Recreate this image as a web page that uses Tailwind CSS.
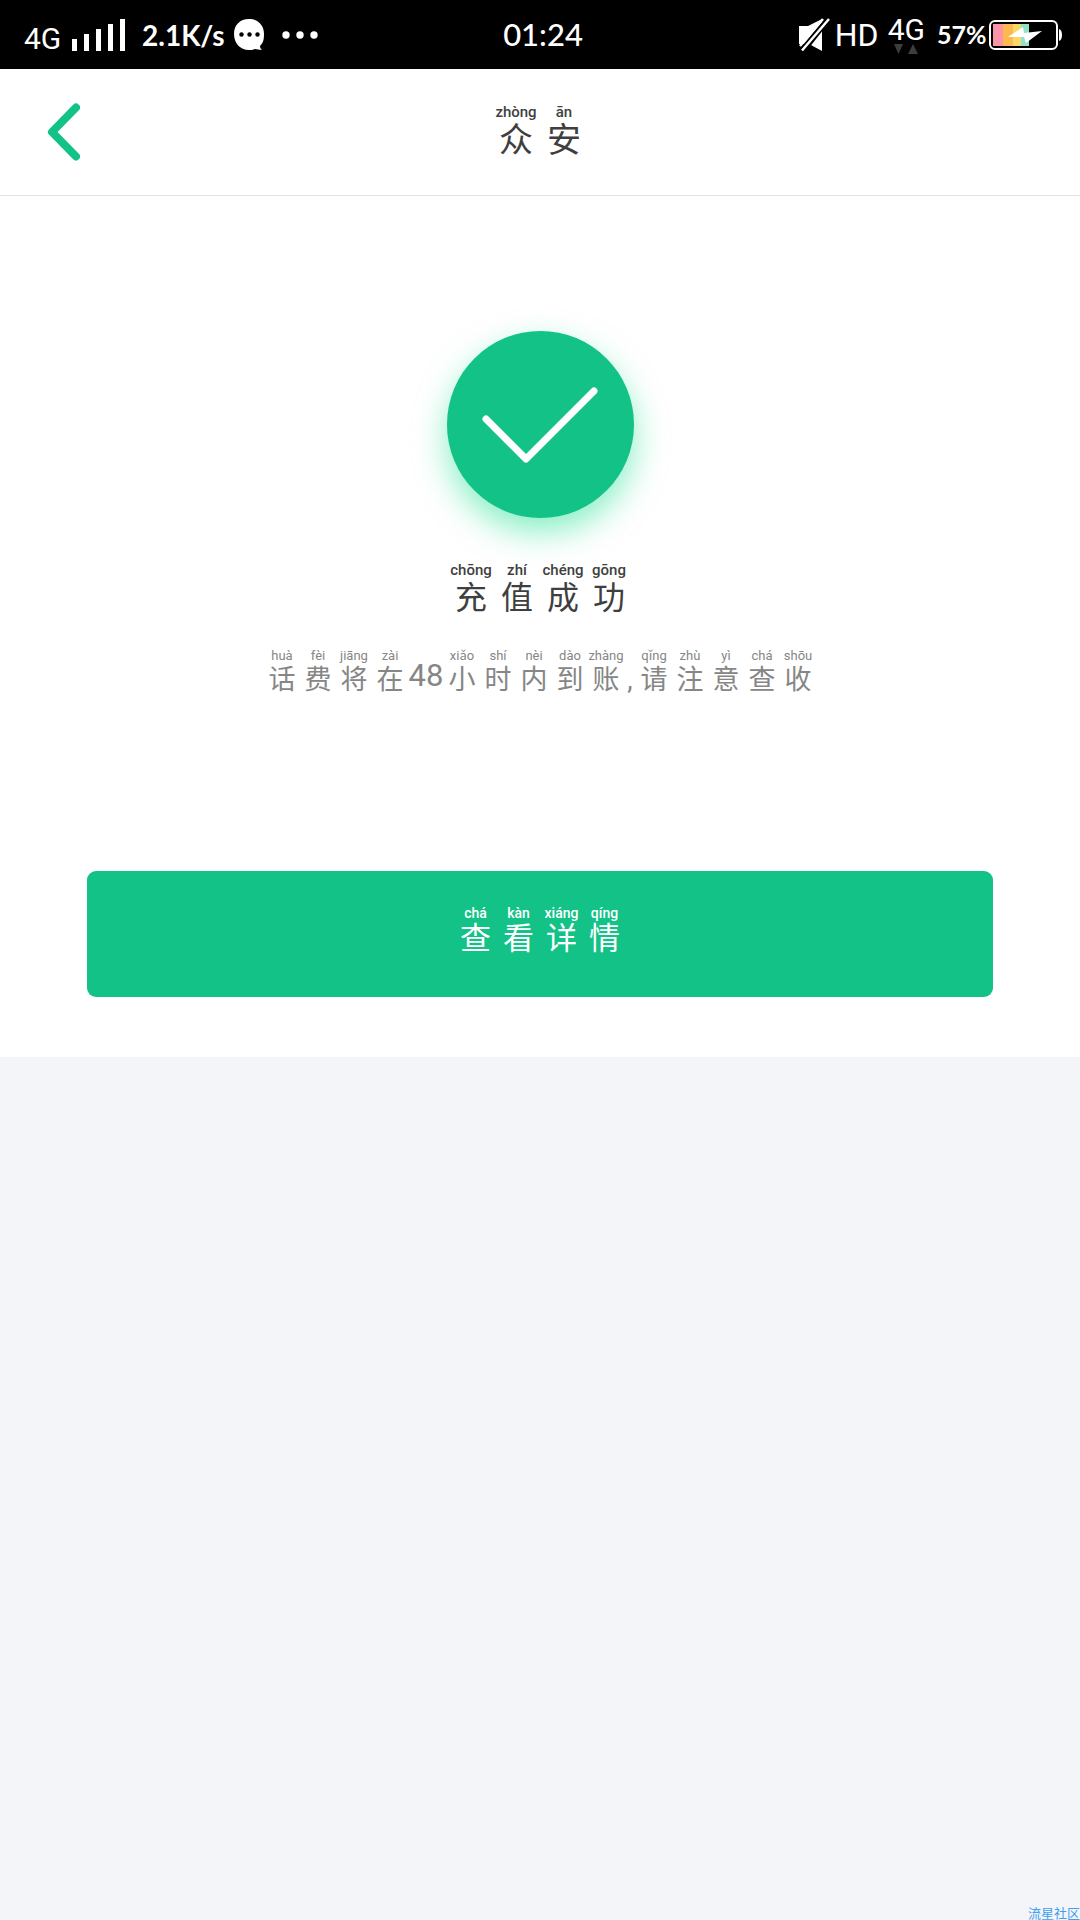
<!DOCTYPE html>
<html lang="zh-CN">
  <head>
    <meta charset="UTF-8" />
    <meta name="viewport" content="width=device-width, initial-scale=1.0" />
    <title>众安</title>
    <script src="https://cdn.jsdelivr.net/npm/@tailwindcss/browser@4"></script>
  </head>
  <body
    class="bg-[#f3f5f9] text-[#3f3f3f] font-[Roboto,'Noto_Sans_CJK_SC',sans-serif] flex flex-col min-h-screen"
  >
    <!-- Status bar -->
    <div
      class="bg-black text-white h-[69px] pl-6 pr-[18px] grid grid-cols-[1fr_auto_1fr] items-center leading-none whitespace-nowrap"
    >
      <div class="flex items-center">
        <span class="text-[30px] w-9 mt-2">4G</span>
        <svg class="ml-3 w-[54px] h-8" viewBox="0 0 54 32" fill="currentColor">
          <path d="M0 20h5v12H0zM12 15h5v17h-5zM24 10h5v22h-5zM36 5h5v27h-5zM48 0h5v32h-5z" />
        </svg>
        <span class="ml-4 w-[88px] text-[28px] font-bold font-[Lato,sans-serif]">2.1K/s</span>
        <svg class="ml-1 w-8 h-8" viewBox="0 0 32 32">
          <path d="M15 0c9 0 15 6 15 15 0 6-1 9-4 12 0 2 1 3 2 4-3 0-5-1-7-1-2 1-4 1-6 1C6 31 0 24 0 15 0 6 6 0 15 0z" fill="#fff" />
          <circle cx="7.500" cy="15.500" r="2.200" />
          <circle cx="15.500" cy="15.500" r="2.200" />
          <circle cx="23.500" cy="15.500" r="2.200" />
        </svg>
        <svg class="ml-4 w-9 h-2" viewBox="0 0 36 8" fill="currentColor">
          <circle cx="4" cy="4" r="3.700" />
          <circle cx="18" cy="4" r="3.700" />
          <circle cx="32" cy="4" r="3.700" />
        </svg>
      </div>

      <span class="text-[31px] font-medium font-[Lato,sans-serif]">01:24</span>

      <div class="flex items-center justify-end">
        <svg class="w-8 h-9" viewBox="0 0 32 36">
          <path d="M0 9h9L23 2v32L10 27H0z" fill="#fff" />
          <path d="M-1 34L27 0l5 3L6 36z" fill="#000" />
          <path d="M1 29L24 2M3 33.500L30 2" stroke="#fff" stroke-width="2.500" />
        </svg>
        <span class="ml-1 w-[45px] text-[32px]">HD</span>
        <div class="ml-2 flex flex-col items-center">
          <span class="text-[30px] leading-7 h-7">4G</span>
          <svg class="w-6 h-[10px]" viewBox="0 0 24 10" fill="#3d3d3d">
            <path d="M0 0h9l-4.500 10zM14 10h10L19 0z" />
          </svg>
        </div>
        <span class="ml-3 w-12 text-[25px] font-bold font-[Lato,sans-serif]">57%</span>
        <svg class="ml-1 w-[73px] h-[30px]" viewBox="0 0 73 30">
          <path d="M4 4h10v22H4z" fill="#fb94a6" />
          <path d="M14 4h10v22H14z" fill="#fdb84f" />
          <path d="M24 4h8v22h-8z" fill="#fbd768" />
          <path d="M32 4h8v22h-8z" fill="#8fe3c8" />
          <rect x="1" y="1" width="67" height="28" rx="5" fill="none" stroke="#fff" stroke-width="2" />
          <path d="M70 9q3 1 3 6t-3 6z" fill="#fff" />
          <path d="M19 17L34 7l1 6 18-2-16 12-2-6z" fill="#fff" />
        </svg>
      </div>
    </div>

    <!-- Header -->
    <header
      class="bg-white h-[127px] border-b border-[#e3e3e3] px-[47px] pb-1 grid grid-cols-[1fr_auto_1fr] items-center"
    >
      <button type="button" aria-label="返回" class="mt-1 justify-self-start text-[#12c286]">
        <svg class="w-[33px] h-[58px]" viewBox="0 0 33 58" fill="none" stroke="currentColor" stroke-width="8" stroke-linecap="round" stroke-linejoin="round">
          <path d="M29 4.500L5 29l24 24.500" />
        </svg>
      </button>
      <h1 class="flex text-[34px] leading-9">
        <ruby class="w-12 flex flex-col-reverse items-center">众<rt class="text-[15px] leading-5 font-medium">zhòng</rt></ruby>
        <ruby class="w-12 flex flex-col-reverse items-center">安<rt class="text-[15px] leading-5 font-medium">ān</rt></ruby>
      </h1>
    </header>

    <!-- Result -->
    <main class="bg-white h-[861px] px-[87px] pt-[135px] flex flex-col items-center">
      <div
        class="size-[187px] shrink-0 rounded-full bg-[#12c286] shadow-[0_14px_32px_#12e28c80] flex items-center justify-center"
      >
        <svg class="w-[116px] h-[76px]" viewBox="0 0 116 76" fill="none" stroke="#fff" stroke-width="7" stroke-linecap="round" stroke-linejoin="round">
          <path d="M4 32l40 40L112 4" />
        </svg>
      </div>

      <h2 class="mt-[42px] flex text-[32px] leading-9">
        <ruby class="w-[46px] flex flex-col-reverse items-center">充<rt class="text-[15px] leading-5 font-medium">chōng</rt></ruby>
        <ruby class="w-[46px] flex flex-col-reverse items-center">值<rt class="text-[15px] leading-5 font-medium">zhí</rt></ruby>
        <ruby class="w-[46px] flex flex-col-reverse items-center">成<rt class="text-[15px] leading-5 font-medium">chéng</rt></ruby>
        <ruby class="w-[46px] flex flex-col-reverse items-center">功<rt class="text-[15px] leading-5 font-medium">gōng</rt></ruby>
      </h2>

      <p class="mt-8 flex items-end text-[27px] leading-8 text-[#868686]">
        <ruby class="w-9 flex flex-col-reverse items-center">话<rt class="text-[13px] leading-4">huà</rt></ruby>
        <ruby class="w-9 flex flex-col-reverse items-center">费<rt class="text-[13px] leading-4">fèi</rt></ruby>
        <ruby class="w-9 flex flex-col-reverse items-center">将<rt class="text-[13px] leading-4">jiāng</rt></ruby>
        <ruby class="w-9 flex flex-col-reverse items-center">在<rt class="text-[13px] leading-4">zài</rt></ruby>
        <span class="w-9 pb-1 text-center text-[31px]">48</span>
        <ruby class="w-9 flex flex-col-reverse items-center">小<rt class="text-[13px] leading-4">xiǎo</rt></ruby>
        <ruby class="w-9 flex flex-col-reverse items-center">时<rt class="text-[13px] leading-4">shí</rt></ruby>
        <ruby class="w-9 flex flex-col-reverse items-center">内<rt class="text-[13px] leading-4">nèi</rt></ruby>
        <ruby class="w-9 flex flex-col-reverse items-center">到<rt class="text-[13px] leading-4">dào</rt></ruby>
        <ruby class="w-9 flex flex-col-reverse items-center">账<rt class="text-[13px] leading-4">zhàng</rt></ruby>
        <span class="w-3 text-center">,</span>
        <ruby class="w-9 flex flex-col-reverse items-center">请<rt class="text-[13px] leading-4">qǐng</rt></ruby>
        <ruby class="w-9 flex flex-col-reverse items-center">注<rt class="text-[13px] leading-4">zhù</rt></ruby>
        <ruby class="w-9 flex flex-col-reverse items-center">意<rt class="text-[13px] leading-4">yì</rt></ruby>
        <ruby class="w-9 flex flex-col-reverse items-center">查<rt class="text-[13px] leading-4">chá</rt></ruby>
        <ruby class="w-9 flex flex-col-reverse items-center">收<rt class="text-[13px] leading-4">shōu</rt></ruby>
      </p>

      <button
        type="button"
        class="mt-auto mb-[60px] pb-1.5 w-full h-[126px] shrink-0 rounded-[9px] bg-[#12c286] text-white text-[31px] leading-9 flex items-center justify-center"
      >
        <ruby class="w-[43px] flex flex-col-reverse items-center">查<rt class="text-[14px] leading-4 font-medium">chá</rt></ruby>
        <ruby class="w-[43px] flex flex-col-reverse items-center">看<rt class="text-[14px] leading-4 font-medium">kàn</rt></ruby>
        <ruby class="w-[43px] flex flex-col-reverse items-center">详<rt class="text-[14px] leading-4 font-medium">xiáng</rt></ruby>
        <ruby class="w-[43px] flex flex-col-reverse items-center">情<rt class="text-[14px] leading-4 font-medium">qíng</rt></ruby>
      </button>
    </main>

    <!-- Watermark -->
    <footer class="mt-auto self-end text-[13px] leading-3 text-[#3f9ff0]">流星社区</footer>
  </body>
</html>
